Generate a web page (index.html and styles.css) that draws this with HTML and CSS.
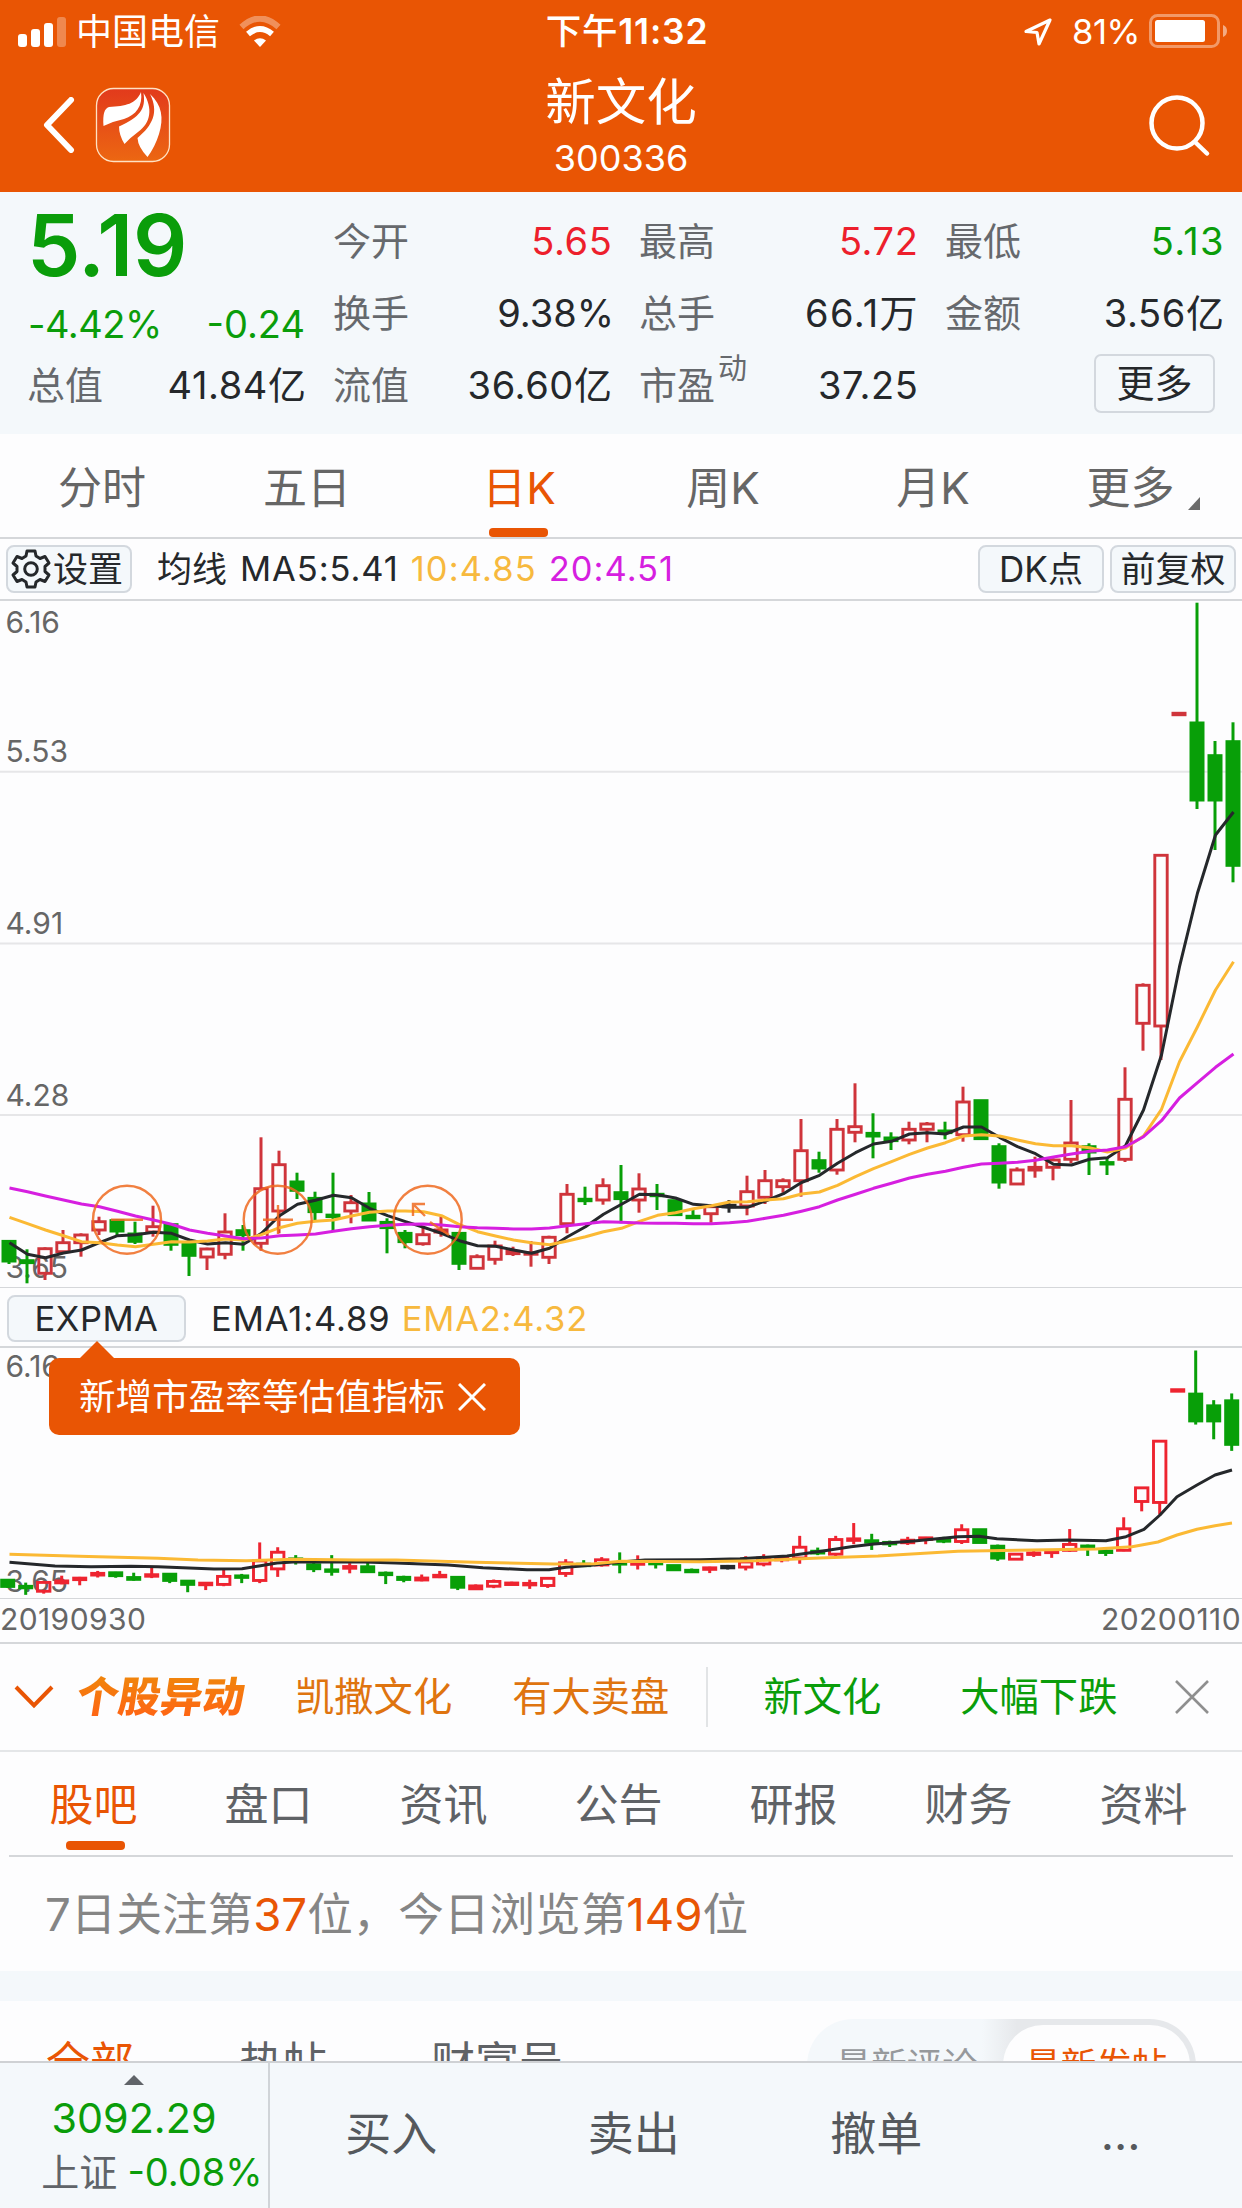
FILE: index.html
```html
<!DOCTYPE html>
<html lang="zh-CN">
<head>
<meta charset="utf-8">
<title>新文化 300336</title>
<link rel="stylesheet" href="styles.css">
</head>
<body>
<div class="screen">
  <header class="header">
    <div class="statusbar">
      <div class="status-left">
        <svg width="50" height="32" viewBox="0 0 50 32" fill="#fff"><rect x="0" y="18" width="9" height="13" rx="3"/><rect x="13" y="13" width="9" height="18" rx="3"/><rect x="26" y="7" width="9" height="24" rx="3"/><rect x="39" y="1" width="9" height="30" rx="3" opacity=".3"/></svg>
        <span class="carrier">中国电信</span>
        <svg class="wifi" width="42" height="32" viewBox="0 0 42 32" fill="none" stroke="#fff"><path d="M2.500 11Q21-6 39.500 11" stroke-width="6" opacity=".35"/><path d="M9 18Q21 8 33 18" stroke-width="6"/><path d="M21 31L15 24.500Q21 20 27 24.500Z" fill="#fff" stroke="none"/></svg>
      </div>
      <div class="clock"><span>下午</span>11:32</div>
      <div class="status-right">
        <svg width="30" height="30" viewBox="0 0 30 30" fill="none" stroke="#fff" stroke-width="3.200" stroke-linejoin="round"><path d="M27 3L3 14.500L14 15.500L16 27Z"/></svg>
        <span class="percent">81%</span>
        <svg width="80" height="36" viewBox="0 0 80 36"><rect x="1.500" y="1.500" width="68" height="31" rx="7" fill="none" stroke="#fff" stroke-opacity=".4" stroke-width="3"/><rect x="6" y="6" width="50" height="22" rx="2.500" fill="#fff"/><path d="M74 11Q78 12.500 78 17T74 23Z" fill="#fff" opacity=".5"/></svg>
      </div>
    </div>
    <div class="titlebar">
      <div class="nav-left">
        <svg width="32" height="56" viewBox="0 0 32 56" fill="none" stroke="#fff" stroke-width="6" stroke-linecap="round" stroke-linejoin="round"><path d="M28 3L4 28L28 53"/></svg>
        <svg class="logo" width="76" height="76" viewBox="0 0 76 76"><defs><linearGradient id="lg" x1="0" y1="0" x2="0" y2="1"><stop offset="0" stop-color="#e23a1c"/><stop offset="1" stop-color="#ec6712"/></linearGradient></defs><rect x="1.500" y="1.500" width="73" height="73" rx="17" fill="url(#lg)" stroke="#ffe2c4" stroke-width="1.300"/><g fill="#fff"><path d="M46 5C41 17 31 19 14 20Q7 22 8.500 39Q19 34 29 32C41 28 48 19 46 5Z"/><path d="M48.500 6C51 22 45 30 24 39.500Q24 48 29.500 57Q36 50 43 45C56 36 58 21 48.500 6Z"/><path d="M55 7C64 25 58 38 42.500 51Q43 60 52.500 70Q60 60 64 47C69 31 67 18 55 7Z"/></g></svg>
      </div>
      <div class="title"><h1>新文化</h1><p>300336</p></div>
      <svg class="search" width="64" height="64" viewBox="0 0 64 64" fill="none" stroke="#fff" stroke-width="4.500" stroke-linecap="round"><circle cx="30" cy="30" r="25.500"/><path d="M48 49L60 60.500"/></svg>
    </div>
  </header>

  <section class="quote">
    <div class="quote-col main">
      <div class="price">5.19</div>
      <div class="cell change"><span>-4.42%</span><span>-0.24</span></div>
      <div class="cell"><label>总值</label><b>41.84亿</b></div>
    </div>
    <div class="quote-col">
      <div class="cell"><label>今开</label><b class="up">5.65</b></div>
      <div class="cell"><label>换手</label><b class="tight">9.38%</b></div>
      <div class="cell"><label>流值</label><b>36.60亿</b></div>
    </div>
    <div class="quote-col">
      <div class="cell"><label>最高</label><b class="up">5.72</b></div>
      <div class="cell"><label>总手</label><b class="loose">66.1万</b></div>
      <div class="cell"><label>市盈<sup>动</sup></label><b>37.25</b></div>
    </div>
    <div class="quote-col">
      <div class="cell"><label>最低</label><b class="down loose">5.13</b></div>
      <div class="cell"><label>金额</label><b>3.56亿</b></div>
      <div class="cell end"><button class="more">更多</button></div>
    </div>
  </section>

  <nav class="periods">
    <span>分时</span><span>五日</span><span class="active">日K</span><span>周K</span><span>月K</span>
    <span class="has-more">更多<svg width="12" height="13" viewBox="0 0 12 13"><path d="M12 0V13H0Z" fill="#6b6b6b"/></svg></span>
  </nav>

  <div class="indicator">
    <button class="chip settings"><svg width="40" height="42" viewBox="-20 -21 40 42" fill="none" stroke="#25282b" stroke-width="3" stroke-linejoin="round"><path d="M-4-18H4L5-13L9-10.500L14-12.500L18-6L14-2.500V2.500L18 6L14 12.500L9 10.500L5 13L4 18H-4L-5 13L-9 10.500L-14 12.500L-18 6L-14 2.500V-2.500L-18-6L-14-12.500L-9-10.500L-5-13Z"/><circle r="6.300"/></svg>设置</button>
    <span class="ma-name">均线</span><span class="ma5">MA5:5.41</span><span class="yellow ma10">10:4.85</span><span class="purple ma20">20:4.51</span>
    <div class="chips"><button class="chip">DK点</button><button class="chip">前复权</button></div>
  </div>
  <svg class="chart" id="kline" width="1242" height="688" viewBox="0 599 1242 688"></svg>

  <div class="indicator sub">
    <button class="chip expma">EXPMA</button>
    <span class="ema1">EMA1:4.89</span><span class="yellow ema2">EMA2:4.32</span>
    <div class="tip"><span>新增市盈率等估值指标</span><svg width="28" height="28" viewBox="0 0 28 28" fill="none" stroke="#fff" stroke-width="3"><path d="M1 1L27 27M27 1L1 27"/></svg></div>
  </div>
  <svg class="chart" id="expma" width="1242" height="252" viewBox="0 1346 1242 252"></svg>
  <div class="dates"><span>20190930</span><span>20200110</span></div>

  <div class="alerts">
    <svg width="40" height="24" viewBox="0 0 40 24" fill="none" stroke="#e95504" stroke-width="4"><path d="M2 2L20 20.500L38 2"/></svg>
    <strong>个股异动</strong>
    <span class="amber a1">凯撒文化</span><span class="amber a2">有大卖盘</span><i></i>
    <span class="a3">新文化</span><span class="a4">大幅下跌</span>
    <svg class="close" width="36" height="36" viewBox="0 0 36 36" fill="none" stroke="#8f8f8f" stroke-width="2.600"><path d="M2 2L34 34M34 2L2 34"/></svg>
  </div>

  <nav class="sections"><span class="active">股吧</span><span>盘口</span><span>资讯</span><span>公告</span><span>研报</span><span>财务</span><span>资料</span></nav>
  <p class="rank">7日关注第<em>37</em>位，今日浏览第<em>149</em>位</p>
  <div class="band"></div>
  <div class="posts">
    <span class="current">全部</span><span class="p2">热帖</span><span class="p3">财富号</span>
    <div class="switch"><span>最新评论</span><span class="on">最新发帖</span></div>
  </div>

  <footer class="bottom">
    <div class="index">
      <svg width="20" height="10" viewBox="0 0 20 10"><path d="M10 0L20 10H0Z" fill="#606469"/></svg>
      <div class="index-value">3092.29</div>
      <div class="index-name">上证<span>-0.08%</span></div>
    </div>
    <div class="actions"><span>买入</span><span>卖出</span><span>撤单</span><span class="dots">...</span></div>
  </footer>
</div>
<script src="chart.js"></script>
</body>
</html>
```
FILE: styles.css
```css
* { box-sizing: border-box; margin: 0; padding: 0; }
body { background: #fff; }
.screen {
  width: 1242px; height: 2208px; overflow: hidden; position: relative;
  display: flex; flex-direction: column;
  font-family: Inter, "Noto Sans CJK SC", sans-serif;
  font-weight: 400; color: #25282b; background: #fdfdfe;
}
.screen > * { flex: none; }
svg { display: block; flex: none; }
button { font: inherit; color: inherit; background: #f4f8fb; border: 2px solid #d3d8de; border-radius: 7px; }
span, label, b, h1, p { white-space: nowrap; }
.yellow { color: #f7b93e; }
.purple { color: #d61fe0; }

/* header */
.header { height: 192px; background: #e95504; color: #fff; }
.statusbar { height: 62px; display: grid; grid-template-columns: 1fr 200px 1fr; align-items: center; font-size: 35px; line-height: 62px; }
.status-left, .status-right { display: flex; align-items: center; }
.status-left { padding-left: 18px; }
.carrier { margin-left: 8px; font-size: 36px; line-height: 64px; }
.wifi { margin-left: 19px; }
.clock { text-align: center; font-weight: 600; font-size: 35.500px; letter-spacing: .8px; padding-left: 12px; white-space: nowrap; }
.clock span { font-weight: 500; }
.status-right { justify-content: flex-end; padding-right: 13px; }
.percent { margin: 0 9px 0 19px; font-size: 34.500px; letter-spacing: -.4px; }
.titlebar { height: 130px; display: grid; grid-template-columns: 1fr 300px 1fr; }
.nav-left { display: flex; align-items: center; padding-left: 43px; height: 126px; }
.logo { margin-left: 20px; }
.title { text-align: center; }
.title h1 { font-size: 50.500px; font-weight: 400; line-height: 60px; padding-top: 10px; height: 68px; }
.title p { font-size: 36px; line-height: 56px; }
.search { justify-self: end; margin: 31px 31px 0 0; }

/* quote */
.quote { height: 242px; background: #f4f8fb; display: grid; grid-template-columns: repeat(4, 277px); gap: 29px; padding: 13px 0 0 28px; }
.cell { display: flex; justify-content: space-between; height: 72px; line-height: 72px; font-size: 38px; }
.cell label { color: #66696d; margin-left: -1px; }
.cell b { font-weight: 400; letter-spacing: .6px; margin-right: -1.500px; }
.cell .tight { letter-spacing: 0; margin-right: -3px; }
.cell .loose { letter-spacing: 1.400px; margin-right: -2px; }
.cell .up { color: #ed1f2c; }
.cell .down, .price, .change { color: #0a9d0a; }
.price { font-size: 85px; font-weight: 600; line-height: 82px; height: 82px; padding-left: 0; letter-spacing: -.3px; margin-left: -1px; }
.main .change { height: 62px; line-height: 74px; }
.change span:first-child { letter-spacing: -.5px; }
sup { font-size: 29px; line-height: 0; vertical-align: 20px; margin-left: 3px; }
.end { justify-content: flex-end; align-items: center; padding-right: 8px; }
.more { width: 121px; height: 59px; font-size: 38px; line-height: 54px; margin-top: -4px; }

/* period tabs */
.periods { height: 105px; border-bottom: 2px solid #d5d7da; display: grid; grid-template-columns: 204px 206px 218px 190px 230px 190px; text-align: center; font-size: 44px; line-height: 108px; color: #666; }
.periods .active, .sections .active { color: #e95504; position: relative; }
.active::after { content: ""; position: absolute; left: 50%; width: 59px; height: 9px; margin-left: -30px; border-radius: 4px; background: #e95504; }
.periods .active::after { bottom: 5px; }
.has-more { display: flex; justify-content: center; gap: 13px; }
.has-more svg { margin-top: 63px; }

/* indicator rows */
.indicator { height: 60px; display: flex; align-items: center; padding: 0 6px; font-size: 34.500px; line-height: 60px; position: relative; }
.chip { width: 126px; height: 48px; font-size: 35px; line-height: 42px; border-radius: 8px; }
.settings { display: flex; align-items: center; padding-left: 3px; gap: 2px; }
.ma-name { margin-left: 25px; font-size: 35px; }
.ma5 { margin-left: 13px; letter-spacing: .9px; }
.ma10 { margin: 0 12px; letter-spacing: 1.100px; }
.ma20 { letter-spacing: 1px; }
.chips { margin-left: auto; display: flex; gap: 6px; }
.sub { height: 59px; border-top: 1px solid #d5d7da; }
.expma { width: 179px; height: 47px; margin: 3px 0 0 1px; font-size: 34.500px; letter-spacing: .5px; }
.ema1 { margin-left: 25px; letter-spacing: .9px; }
.ema2 { margin-left: 11px; letter-spacing: .8px; }
.sub > span { padding-top: 4px; }
.tip { position: absolute; z-index: 2; left: 49px; top: 70px; width: 471px; height: 77px; border-radius: 10px; background: #e95504; color: #fff; display: flex; align-items: center; padding-left: 30px; gap: 13px; font-size: 36.600px; }
.tip::before { content: ""; position: absolute; left: 31px; top: -17px; border: 17px solid transparent; border-top: 0; border-bottom-color: #e95504; }
.chart { font-size: 30px; }
.dates { height: 46px; border: solid #d5d7da; border-width: 1px 0 2px; display: flex; justify-content: space-between; padding: 0 1px 0 0; font-size: 30px; line-height: 41px; letter-spacing: .4px; color: #666; }

/* alerts */
.alerts { height: 108px; border-bottom: 2px solid #e4e6e8; display: flex; align-items: center; padding-left: 14px; font-size: 39.300px; line-height: 104px; color: #0a9d0a; }
.alerts strong { margin-left: 23px; width: 172px; font-size: 42px; font-weight: 900; transform: skewX(-9deg); background: linear-gradient(#f0850c 30%, #ff6414 70%); -webkit-background-clip: text; color: transparent; }
.amber { color: #df740f; }
.a1 { margin-left: 46px; }
.a2 { margin-left: 60px; }
.alerts i { width: 2px; height: 60px; margin-left: 37px; background: #e2e4e6; }
.a3 { margin-left: 55px; }
.a4 { margin-left: 79px; }
.close { margin-left: 57px; }

.sections { height: 105px; margin: 0 9px; border-bottom: 2px solid #d5d7da; display: flex; font-size: 44px; line-height: 106px; color: #5f6266; }
.sections span { width: 175px; margin-left: -3px; margin-right: 3px; text-align: center; flex: none; }
.sections .active::after { bottom: 5px; margin-left: -28px; }
.rank { height: 114px; padding-left: 45px; font-size: 45.600px; line-height: 116px; color: #858585; }
.rank em { font-style: normal; color: #e95504; }
.band { height: 30px; background: #f4f8fb; }
.posts { height: 60px; overflow: hidden; display: flex; font-size: 44px; line-height: 124px; padding-left: 46px; color: #5f6266; }
.posts .current { color: #e95504; }
.p2 { margin-left: 105px; }
.p3 { margin-left: 104px; }
.switch { margin: 18px 46px 0 auto; width: 389px; height: 92px; border-radius: 46px; background: linear-gradient(90deg, #f4f8fb 45%, #e6e8eb 54%); display: flex; padding: 6px; font-size: 35.500px; line-height: 82px; color: #96999c; }
.switch span { width: 190px; text-align: center; padding-right: 2px; }
.switch .on { width: 188px; height: 80px; line-height: 81px; border-radius: 40px; background: #fdfdfe; color: #e95504; padding-right: 0; }

/* bottom bar */
.bottom { height: 147px; background: #f4f8fb; border-top: 2px solid #cfd1d4; display: flex; }
.index { width: 270px; border-right: 2px solid #d0d4d8; padding-top: 12px; display: flex; flex-direction: column; align-items: center; }
.index-value { font-size: 41.300px; line-height: 50px; margin-top: 8px; color: #0a9d0a; }
.index-name { font-size: 38px; line-height: 58px; color: #606469; margin-left: 36px; }
.index-name span { color: #0a9d0a; margin-left: 10px; }
.actions { flex: 1; display: grid; grid-template-columns: repeat(4, 242.500px); text-align: center; font-size: 46px; line-height: 140px; color: #55595d; }
.dots { padding-left: 4px; }
```
FILE: chart.js
```js
// Daily candles: direction, high, body top, body bottom, low (vertical plot units)
const candles = [
  ['g',1240.7,1240.7,1261.7,1264],['g',1249.3,1260,1263.3,1283.3],['r',1247.3,1248.7,1273.3,1280],['r',1230,1242.7,1251.7,1254],
  ['r',1233.3,1235,1242.7,1256.7],['r',1216.7,1221.7,1230,1235],['g',1219.3,1220,1231.7,1235.7],['g',1221.7,1233.3,1242,1244],
  ['r',1205.7,1226.7,1232,1236.7],['g',1224,1224,1245,1250.7],['g',1243.3,1243.3,1256,1276],['r',1247.7,1249,1257,1270],
  ['r',1213.3,1232,1254.3,1259.3],['g',1225,1230,1235.3,1250.7],['r',1137.3,1188.7,1243.3,1250.7],['r',1150.7,1164.7,1211,1233.3],
  ['g',1172.7,1181.3,1191,1199],['g',1191.7,1197.7,1212.3,1220],['g',1172.7,1214.7,1217,1230],['r',1195,1202.7,1211,1223.3],
  ['g',1192,1203.3,1220.7,1220.7],['g',1218.3,1221.7,1228.3,1253.3],['g',1230,1232.7,1242.3,1248.3],['r',1226.7,1234.7,1243.7,1245.7],
  ['r',1216.7,1229.3,1232.7,1236.7],['g',1232.7,1232.7,1264,1270],['r',1254.3,1256.7,1268.3,1269],['r',1240.7,1246,1259.3,1264.7],
  ['r',1246.7,1250.7,1254.3,1256],['r',1241,1252.7,1254.3,1266.7],['r',1235.7,1237.3,1257.3,1264],['r',1184,1194.3,1223.7,1233.3],
  ['g',1186.7,1199,1201,1205],['r',1178.3,1185.7,1200,1204.7],['g',1165,1192,1199.3,1223.3],['r',1173.3,1189,1200,1212.7],
  ['g',1184,1194,1196,1210],['g',1200,1200,1215.3,1215.3],['g',1210,1216,1218,1218],['r',1205,1206.7,1213.7,1222.7],
  ['k',1200,1205,1207,1212.7],['r',1175.7,1191.7,1206,1215.3],['r',1170,1180.7,1197.3,1204],['r',1178.3,1180.7,1186.7,1192.7],
  ['r',1119,1150.7,1180.7,1196.7],['g',1151.7,1160,1168.7,1172.7],['r',1119,1129.3,1170,1174.7],['r',1083.3,1126.7,1132.3,1142.3],
  ['g',1113.3,1132.7,1136.7,1158.3],['g',1132.3,1137.3,1141.3,1150],['r',1121.7,1129.3,1140,1144.3],['r',1122,1124,1129.3,1142.3],
  ['g',1121.7,1130.3,1133.3,1139.3],['r',1086.7,1102,1134.7,1141.7],['g',1100,1100,1139.3,1139.3],['g',1143.3,1146,1182.7,1188.7],
  ['r',1167.3,1170,1184,1184.7],['r',1156.7,1166.7,1170.7,1177.7],['r',1158.3,1160,1167.3,1180.3],['r',1100,1143,1159.3,1163.3],
  ['g',1143.3,1146,1152.7,1175],['g',1157.3,1162.3,1164.3,1175],['r',1067.3,1099.3,1159.3,1162],['r',983.3,985.3,1023.3,1050.7],
  ['r',855.3,855.3,1026,1060],['r',713,713,715,715],['g',602.7,722.3,800.7,809],['g',741,755,800.7,850],['g',722.3,741,866,882.3]
];
// Moving averages, one value per candle
const ma5 = [1242.7,1254.3,1257.7,1253,1250,1242.7,1235.7,1234.7,1232.3,1233.3,1240,1244,1242.7,1244.3,1233.3,1215.7,1204.3,1200.3,1195.3,1197.7,1208.3,1215.7,1221.7,1227.3,1233.3,1240.7,1245.7,1246.3,1250,1253.3,1248.3,1236.7,1226.7,1214.3,1204.3,1194.3,1194.7,1198,1204.3,1205.7,1207.3,1207.3,1201,1193.7,1182.5,1175.3,1163.3,1152.7,1144,1141.3,1134,1132.7,1134,1127,1127,1137.3,1146.7,1153.7,1164.3,1165,1159.3,1157.7,1145.7,1110,1055,966.7,893,835,812];
const ma10 = [1217.3,1223.7,1230,1235.7,1241.7,1242.7,1245,1246.7,1244.3,1241.7,1242,1241,1239,1240,1234.7,1227.7,1223.3,1221.3,1220,1216,1212.3,1211,1211,1211.7,1215.7,1224.7,1231.7,1236,1240,1242.7,1244.7,1241,1236.7,1231.7,1228.3,1221.3,1215.3,1212.7,1208.7,1205.7,1202,1201.7,1200,1198.7,1194,1192,1185.3,1176.7,1168.7,1161.7,1154.3,1148,1142.7,1136,1134.7,1136,1140,1143.7,1145.7,1145.7,1147.7,1152,1148,1136,1109.3,1061.7,1026.7,990,961.7];
const ma20 = [1188,1191.7,1196,1200,1204,1206.7,1211.3,1216,1220,1224.3,1230,1233.3,1236,1238.7,1238,1235.7,1235,1234,1231.3,1228.7,1226.7,1225.3,1224.3,1224,1225,1226.7,1227.7,1228.3,1229,1229,1228,1225.7,1223.7,1221.7,1222.3,1223,1223.3,1223.3,1223.7,1223.7,1222.7,1221.3,1218.3,1215.3,1211.2,1206.7,1200,1194.3,1188.3,1183.3,1178,1174.3,1171.3,1167.3,1164,1163.3,1162.3,1160.3,1157,1154,1151.3,1150,1146.7,1136.7,1120.7,1098,1082.7,1067.3,1054];
// EMA curves as x,y vertices
const ema1 = '9.5,1562.3 55,1566 91,1566.7 131,1566.3 158,1566.7 214,1569 242,1568.7 259,1566 277,1563 293,1562 356,1561.7 396,1563 448,1565 483,1567.7 527,1569.7 549,1569.7 566,1567.3 594,1565 621,1562 645,1560 700,1559.7 740,1558.7 787,1556 823,1551 851,1546.7 874,1544 914,1541 958,1536.7 979,1536.3 997,1538.7 1037,1540.7 1068,1540 1106,1540.7 1126,1536.7 1144,1529.3 1160,1515 1177,1496.7 1197,1485 1215,1475 1232,1470';
const ema2 = '9.5,1554.3 79,1556.3 158,1558.3 198,1560 246,1560.7 293,1559.3 356,1560 396,1560 475,1562.3 554,1564 594,1563.7 621,1561.3 700,1561.7 756,1560.7 819,1558 878,1556 958,1551.3 1017,1550.3 1096,1549 1132,1546.7 1158,1542 1177,1535 1197,1529.3 1215,1525.7 1232,1523';

const line = (x1, y1, x2, y2, c, w) => `<path d="M${x1} ${y1}L${x2} ${y2}" stroke="${c}" stroke-width="${w}" fill="none"/>`;
const label = (y, t) => `<text x="5.5" y="${y}" fill="#666">${t}</text>`;
const curve = (pts, c) => `<polyline points="${pts}" fill="none" stroke="${c}" stroke-width="3" stroke-linejoin="round"/>`;
const series = (values, c) => curve(values.map((v, i) => `${9.5 + 18 * i},${v}`).join(' '), c);

function drawCandles(x0, mapY, red) {
  const colors = { g: '#089f08', r: red, k: '#25282b' };
  return candles.map(([kind, ...v], i) => {
    const x = x0 + 18 * i, c = colors[kind];
    let [hi, top, bottom, lo] = v.map(mapY);
    if (bottom - top < 2.8) { const m = (top + bottom) / 2; top = m - 1.4; bottom = m + 1.4; }
    const wicks = (hi < top ? line(x, hi, x, top, c, 3) : '') + (lo > bottom ? line(x, bottom, x, lo, c, 3) : '');
    const hollow = kind === 'r' && bottom - top > 4.6;
    return wicks + (hollow
      ? `<rect x="${x - 6.2}" y="${top}" width="12.400" height="${bottom - top}" fill="none" stroke="${c}" stroke-width="2.9"/>`
      : `<rect x="${x - 7.5}" y="${top - .8}" width="15" height="${bottom - top + 1.6}" fill="${c}"/>`);
  }).join('');
}

const ring = x => `<circle cx="${x}" cy="1219.7" r="34"/>`;
document.getElementById('kline').innerHTML =
  line(0, 600, 1242, 600, '#d5d7da', 2) +
  [771.7, 943.5, 1115].map(y => line(0, y, 1242, y, '#e6e6e8', 2)).join('') +
  label(632.5, '6.16') + label(762, '5.53') + label(934, '4.91') + label(1105.5, '4.28') + label(1278, '3.65') +
  drawCandles(9, y => y, '#cf343b') +
  series(ma5, '#25282b') + series(ma10, '#fbb934') + series(ma20, '#d61fe0') +
  `<g fill="none" stroke="#ee6a20" stroke-opacity=".85" stroke-width="2.400">${ring(127)}${ring(277.7)}${ring(427.7)}
   <path d="M111 1219.700H143M263 1219.700H293M278 1205V1234M413 1216V1204H425M413 1204L425 1216M430 1222L449 1235"/></g>`;

document.getElementById('expma').innerHTML =
  line(0, 1347, 1242, 1347, '#d5d7da', 2) +
  label(1376.5, '6.16') + label(1592, '3.65') +
  drawCandles(7.7, y => 1350.5 + (y - 602.7) * .359, '#ee2430') +
  curve(ema1, '#25282b') + curve(ema2, '#fbb934');
```
